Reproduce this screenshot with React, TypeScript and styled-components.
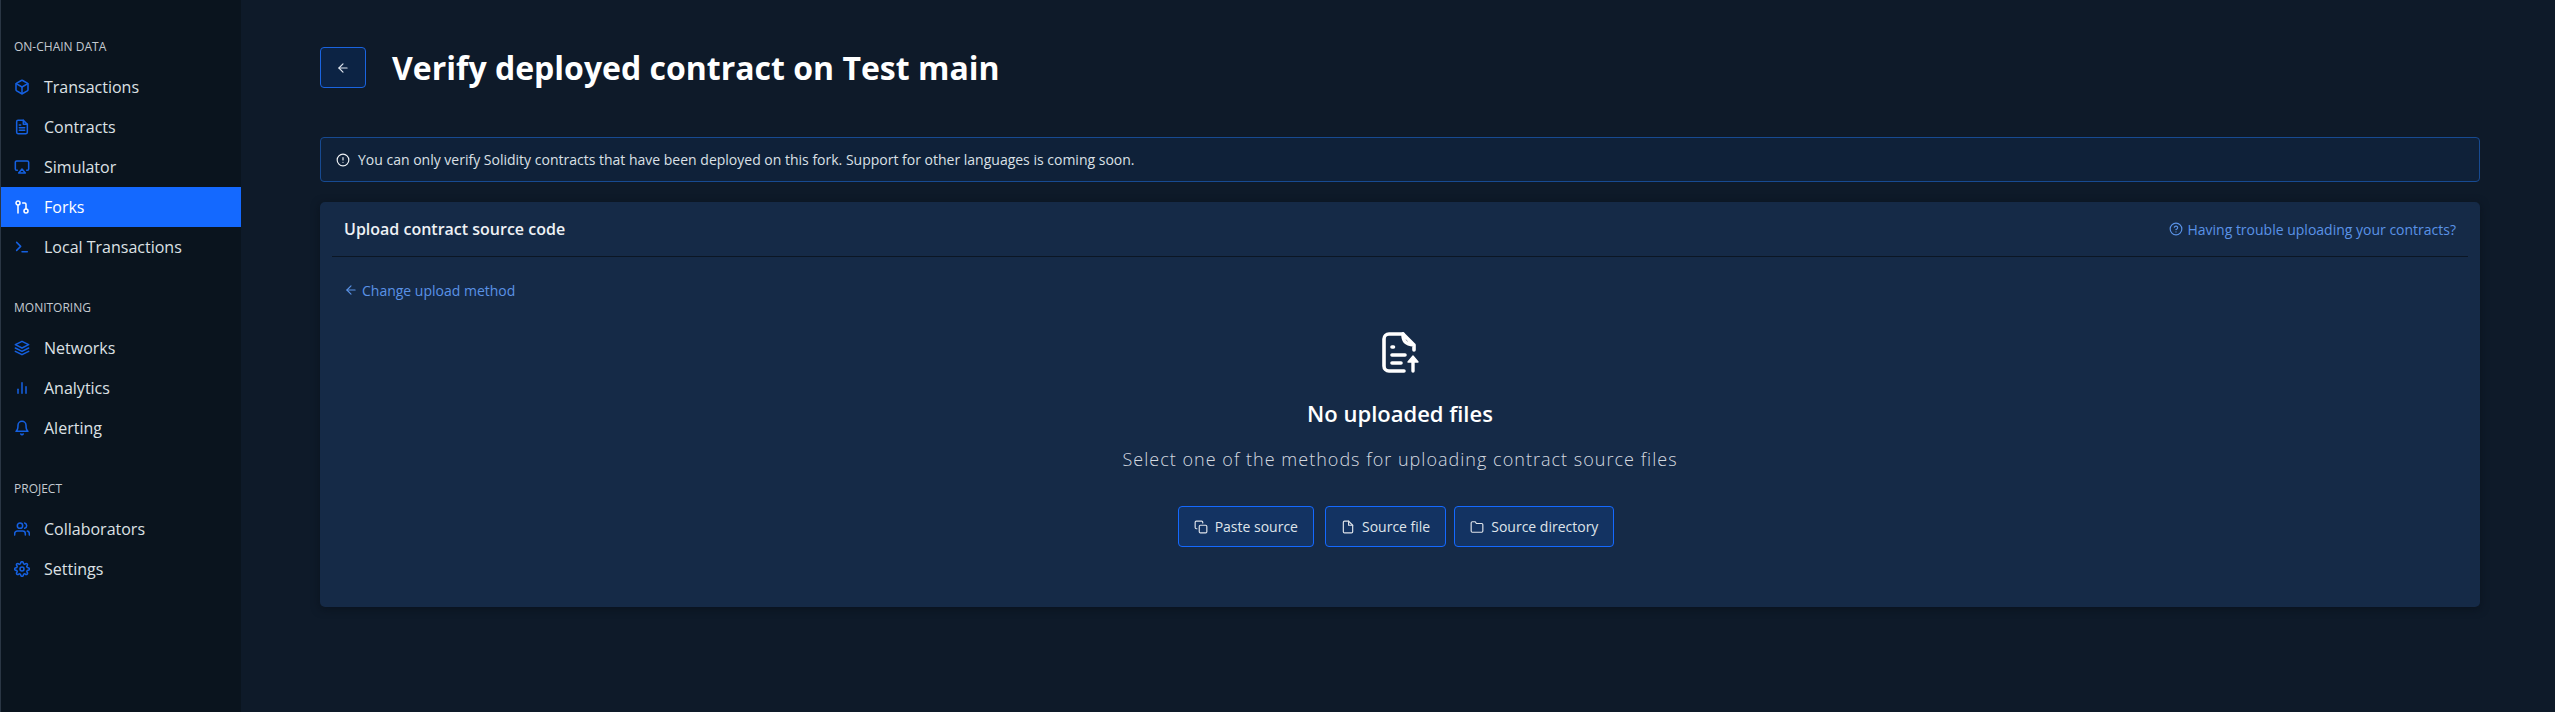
import React from 'react';
import styled, { createGlobalStyle } from 'styled-components';
import { Box } from 'lucide-react';
import {
  FiAirplay, FiAlertCircle, FiArrowLeft, FiBarChart2, FiBell, FiCopy, FiFile, FiFileText,
  FiFolder, FiGitPullRequest, FiHelpCircle, FiLayers, FiSettings, FiTerminal, FiUsers,
} from 'react-icons/fi';

const GlobalStyle = createGlobalStyle`
  html, body { margin: 0; padding: 0; height: 100%; background: #0e1a29; }
  body { font-family: "Open Sans", "Liberation Sans", sans-serif; color: #fff; }
  * { box-sizing: border-box; }
`;

const Page = styled.div`
  display: flex;
  height: 712px;
  overflow: hidden;
`;

const Sidebar = styled.aside`
  width: 241px;
  flex: none;
  background: #0a141e;
  border-left: 1px solid #2a3644;
  padding-top: 38px;
`;

const NavGroup = styled.nav`
  margin-bottom: 32px;
`;

const GroupTitle = styled.div`
  height: 18px;
  line-height: 18px;
  font-size: 12px;
  color: #c4cad1;
  padding-left: 13px;
  margin-bottom: 11px;
  text-transform: uppercase;
`;

const NavItem = styled.div<{ $active?: boolean }>`
  display: flex;
  align-items: center;
  height: 40px;
  padding-left: 13px;
  font-size: 16px;
  background: ${p => (p.$active ? '#1469ff' : 'transparent')};
  color: ${p => (p.$active ? '#ffffff' : '#dde1e5')};
  font-weight: ${p => (p.$active ? 500 : 400)};

  svg {
    width: 16px;
    height: 16px;
    margin-right: 14px;
    flex: none;
    stroke-width: 2.3;
    color: ${p => (p.$active ? '#ffffff' : '#1560e0')};
  }
`;

const Main = styled.main`
  flex: 1;
  padding: 47px 75px 0 79px;
`;

const TitleRow = styled.header`
  display: flex;
  align-items: center;
  height: 41px;
  margin-bottom: 49px;
`;

const BackButton = styled.button`
  width: 46px;
  height: 41px;
  display: flex;
  align-items: center;
  justify-content: center;
  padding: 0;
  margin-right: 26px;
  background: #0c2344;
  border: 1px solid #1a64e0;
  border-radius: 4px;
  color: #dfe5ee;

  svg { width: 14px; height: 14px; }
`;

const Title = styled.h1`
  margin: 0;
  font-size: 32px;
  font-weight: 700;
  letter-spacing: 0;
  color: #fff;
`;

const Alert = styled.div`
  display: flex;
  align-items: center;
  gap: 8px;
  height: 45px;
  padding-left: 15px;
  margin-bottom: 20px;
  background: #0f2139;
  border: 1px solid #174a91;
  border-radius: 4px;
  font-size: 14px;
  color: #dbe0e6;

  svg { width: 14px; height: 14px; color: #eef1f4; }
`;

const Panel = styled.section`
  height: 405px;
  padding: 0 12px;
  background: #152a47;
  border-radius: 5px;
  box-shadow: 0 2px 8px rgba(5, 12, 20, 0.5);
`;

const PanelHeader = styled.div`
  display: flex;
  align-items: center;
  justify-content: space-between;
  height: 55px;
  padding: 0 12px;
  border-bottom: 1px solid #0b1624;
`;

const PanelTitle = styled.h2`
  margin: 0;
  font-size: 16px;
  font-weight: 600;
  color: #eef1f5;
`;

const BlueLink = styled.a`
  display: inline-flex;
  align-items: center;
  gap: 4px;
  font-size: 14px;
  color: #5a92e6;

  svg { width: 14px; height: 14px; }
`;

const MethodRow = styled.div`
  padding: 23px 12px 0;
  height: 62px;
`;

const Empty = styled.div`
  display: flex;
  flex-direction: column;
  align-items: center;
`;

const EmptyIcon = styled.svg`
  width: 37px;
  height: 41px;
  margin-top: 13px;
  color: #fff;
`;

const EmptyTitle = styled.h3`
  margin: 25px 0 0;
  font-size: 22px;
  line-height: 30px;
  font-weight: 600;
  color: #fff;
`;

const EmptyText = styled.p`
  margin: 17px 0 0;
  font-size: 18px;
  line-height: 28px;
  font-weight: 300;
  letter-spacing: 1.02px;
  color: #d5dae0;
`;

const Actions = styled.div`
  display: flex;
  gap: 8px;
  margin-top: 33px;
  padding-right: 8px;
`;

const ActionButton = styled.button`
  display: flex;
  align-items: center;
  gap: 7px;
  height: 41px;
  padding: 0 15px;
  background: #133362;
  border: 1px solid #1469ff;
  border-radius: 4px;
  font-family: inherit;
  font-size: 14px;
  color: #dfe4ea;

  &:first-child { margin-right: 3px; }

  svg { width: 14px; height: 14px; }
`;

const groups = [
  {
    title: 'On-chain data',
    items: [
      { label: 'Transactions', icon: <Box /> },
      { label: 'Contracts', icon: <FiFileText /> },
      { label: 'Simulator', icon: <FiAirplay /> },
      { label: 'Forks', icon: <FiGitPullRequest />, active: true },
      { label: 'Local Transactions', icon: <FiTerminal /> },
    ],
  },
  {
    title: 'Monitoring',
    items: [
      { label: 'Networks', icon: <FiLayers /> },
      { label: 'Analytics', icon: <FiBarChart2 /> },
      { label: 'Alerting', icon: <FiBell /> },
    ],
  },
  {
    title: 'Project',
    items: [
      { label: 'Collaborators', icon: <FiUsers /> },
      { label: 'Settings', icon: <FiSettings /> },
    ],
  },
];

const App = () => (
  <>
    <GlobalStyle />
    <Page>
      <Sidebar>
        {groups.map(group => (
          <NavGroup key={group.title}>
            <GroupTitle>{group.title}</GroupTitle>
            {group.items.map(item => (
              <NavItem key={item.label} $active={item.active}>
                {item.icon}
                {item.label}
              </NavItem>
            ))}
          </NavGroup>
        ))}
      </Sidebar>
      <Main>
        <TitleRow>
          <BackButton><FiArrowLeft /></BackButton>
          <Title>Verify deployed contract on Test main</Title>
        </TitleRow>
        <Alert>
          <FiAlertCircle />
          You can only verify Solidity contracts that have been deployed on this fork. Support for other languages is coming soon.
        </Alert>
        <Panel>
          <PanelHeader>
            <PanelTitle>Upload contract source code</PanelTitle>
            <BlueLink><FiHelpCircle />Having trouble uploading your contracts?</BlueLink>
          </PanelHeader>
          <MethodRow>
            <BlueLink><FiArrowLeft />Change upload method</BlueLink>
          </MethodRow>
          <Empty>
            <EmptyIcon viewBox="0 0 37 41" fill="none" stroke="currentColor" strokeWidth="3.6" strokeLinecap="round" strokeLinejoin="round">
              <path d="M21 2H7a5 5 0 0 0-5 5v27a5 5 0 0 0 5 5h15" />
              <path d="M21 2c0 7 2 10 11 11M21 2l11 11v5" />
              <path d="M10 15h1.5M10 23h13M10 31h9" />
              <path d="M31 39V30" strokeWidth="3.4" />
              <path d="M31 24l5 6h-10z" fill="currentColor" strokeWidth="1.4" />
            </EmptyIcon>
            <EmptyTitle>No uploaded files</EmptyTitle>
            <EmptyText>Select one of the methods for uploading contract source files</EmptyText>
            <Actions>
              <ActionButton><FiCopy />Paste source</ActionButton>
              <ActionButton><FiFile />Source file</ActionButton>
              <ActionButton><FiFolder />Source directory</ActionButton>
            </Actions>
          </Empty>
        </Panel>
      </Main>
    </Page>
  </>
);

export default App;
